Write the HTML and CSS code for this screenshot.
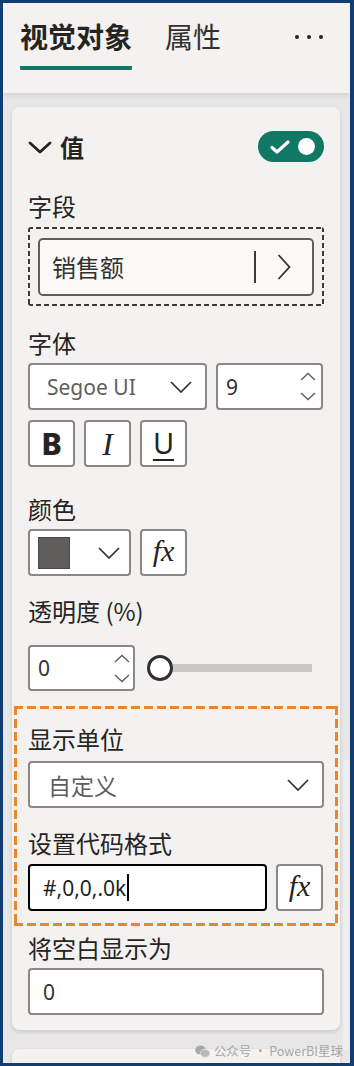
FILE: index.html
```html
<!DOCTYPE html>
<html lang="zh-CN">
<head>
<meta charset="utf-8">
<title>格式</title>
<link rel="stylesheet" href="styles.css">
</head>
<body>
<div class="app">
  <header class="tabs">
    <div class="tab active">视觉对象</div>
    <div class="tab">属性</div>
    <div class="more">
      <svg width="30" height="6" viewBox="0 0 30 6"><circle cx="3" cy="3" r="2"/><circle cx="15" cy="3" r="2"/><circle cx="27" cy="3" r="2"/></svg>
    </div>
  </header>

  <main class="pane">
    <section class="card">
      <div class="card-head">
        <svg class="head-chev" width="24" height="13" viewBox="0 0 24 13"><polyline points="2,2 12,11 22,2"/></svg>
        <span class="card-title">值</span>
        <div class="toggle">
          <svg width="22" height="16" viewBox="0 0 22 16"><polyline points="3,8.5 8,13 19,3"/></svg>
          <span class="knob"></span>
        </div>
      </div>

      <div class="label first">字段</div>
      <div class="drop-zone">
        <div class="well">
          <span class="well-text">销售额</span>
          <span class="sep"></span>
          <svg class="right-chev" width="14" height="26" viewBox="0 0 14 26"><polyline points="1.5,1 12.5,13 1.5,25"/></svg>
        </div>
      </div>

      <div class="label after-zone">字体</div>
      <div class="row">
        <div class="box font-select">
          <span class="value latin muted">Segoe UI</span>
          <svg class="down-chev" width="22" height="12" viewBox="0 0 22 12"><polyline points="1,1 11,11 21,1"/></svg>
        </div>
        <div class="box size-input">
          <span class="value latin">9</span>
          <div class="spin">
            <svg width="16" height="9" viewBox="0 0 16 9"><polyline points="1,8 8,1.5 15,8"/></svg>
            <svg width="16" height="9" viewBox="0 0 16 9"><polyline points="1,1 8,7.5 15,1"/></svg>
          </div>
        </div>
      </div>
      <div class="row style-row">
        <div class="box btn bold">B</div>
        <div class="box btn italic">I</div>
        <div class="box btn under">U</div>
      </div>

      <div class="label after-btns">颜色</div>
      <div class="row">
        <div class="box color-select">
          <span class="swatch"></span>
          <svg class="down-chev" width="22" height="12" viewBox="0 0 22 12"><polyline points="1,1 11,11 21,1"/></svg>
        </div>
        <div class="box btn fx">fx</div>
      </div>

      <div class="label after-row">透明度 (%)</div>
      <div class="row opacity-row">
        <div class="box num-input">
          <span class="value latin">0</span>
          <div class="spin">
            <svg width="16" height="9" viewBox="0 0 16 9"><polyline points="1,8 8,1.5 15,8"/></svg>
            <svg width="16" height="9" viewBox="0 0 16 9"><polyline points="1,1 8,7.5 15,1"/></svg>
          </div>
        </div>
        <div class="slider">
          <span class="thumb"></span>
          <span class="track"></span>
        </div>
      </div>

      <div class="highlight">
        <div class="label">显示单位</div>
        <div class="box wide-select">
          <span class="value muted">自定义</span>
          <svg class="down-chev" width="22" height="12" viewBox="0 0 22 12"><polyline points="1,1 11,11 21,1"/></svg>
        </div>
        <div class="label after-row">设置代码格式</div>
        <div class="row">
          <div class="box code-input">
            <span class="value latin strong">#,0,0,.0k</span><span class="caret"></span>
          </div>
          <div class="box btn fx">fx</div>
        </div>
      </div>

      <div class="label after-hl">将空白显示为</div>
      <div class="box blank-input">
        <span class="value latin">0</span>
      </div>
    </section>

    <section class="card next"></section>

    <div class="scroll-thumb"></div>
    <div class="watermark">
      <svg width="15" height="13" viewBox="0 0 15 13"><ellipse cx="5.5" cy="5" rx="5.3" ry="4.5"/><ellipse cx="10" cy="8.3" rx="4.8" ry="4" class="b2"/></svg>
      <span>公众号 · PowerBI星球</span>
    </div>
  </main>
</div>
</body>
</html>
```

FILE: styles.css
```css
* {
  box-sizing: border-box;
  margin: 0;
  padding: 0;
}

html, body {
  width: 354px;
  height: 1066px;
  overflow: hidden;
}

body {
  background: #123d70;
  font-family: "Noto Sans CJK SC", "Noto Sans", sans-serif;
  color: #252423;
}

.app {
  position: relative;
  margin: 3px 4px 3px 3px;
  height: 1060px;
  background: #e7e7e7;
  overflow: hidden;
  display: flex;
  flex-direction: column;
}

/* ---------- tabs ---------- */
.tabs {
  flex: none;
  height: 90px;
  background: #f3f2f1;
  display: flex;
  align-items: flex-start;
  padding: 15px 0 0 17px;
  box-shadow: 0 2px 5px rgba(0, 0, 0, 0.10);
  position: relative;
  z-index: 1;
}

.tab {
  font-size: 28px;
  line-height: 36px;
  color: #323130;
  padding-bottom: 12px;
  margin-right: 33px;
}

.tab.active {
  font-weight: 700;
  color: #252423;
  border-bottom: 4px solid #117865;
  border-radius: 0 0 1px 1px;
}

.more {
  margin-left: auto;
  margin-right: 26px;
  padding-top: 16px;
}

.more svg {
  display: block;
  fill: #252423;
}

/* ---------- pane ---------- */
.pane {
  position: relative;
  flex: 1;
  display: flex;
  flex-direction: column;
  padding: 14px 10px 0 9px;
}

.card {
  background: #f3f2f1;
  border-radius: 8px;
  box-shadow: 0 2px 4px rgba(0, 0, 0, 0.13);
  padding: 24px 16px 15px 16px;
  display: flex;
  flex-direction: column;
}

.card.next {
  margin-top: 19px;
  height: 40px;
  flex: none;
}

.card-head {
  height: 31px;
  display: flex;
  align-items: center;
}

.head-chev {
  display: block;
  fill: none;
  stroke: #252423;
  stroke-width: 2.8;
  stroke-linecap: round;
  stroke-linejoin: round;
  margin-top: 1px;
}

.card-title {
  margin-left: 8px;
  font-size: 24px;
  font-weight: 700;
  line-height: 31px;
}

.toggle {
  margin-left: auto;
  width: 66px;
  height: 31px;
  border-radius: 16px;
  background: #117865;
  display: flex;
  align-items: center;
  padding: 0 9px 0 11px;
  justify-content: space-between;
}

.toggle svg {
  display: block;
  fill: none;
  stroke: #ffffff;
  stroke-width: 3.2;
  stroke-linecap: round;
  stroke-linejoin: round;
}

.knob {
  width: 17px;
  height: 17px;
  border-radius: 50%;
  background: #ffffff;
}

/* ---------- labels ---------- */
.label {
  font-size: 24px;
  line-height: 32px;
  color: #252423;
  white-space: nowrap;
}

.label.first { margin-top: 28px; }
.label.after-zone { margin-top: 21px; }
.label.after-btns { margin-top: 26px; }
.label.after-row { margin-top: 19px; }
.label.after-hl { margin-top: 6px; }

/* ---------- drop zone ---------- */
.drop-zone {
  margin-top: 5px;
  padding: 11px 10px 10px 10px;
  background:
    repeating-linear-gradient(90deg, #3b3a39 0 5px, transparent 5px 8px) left top / 100% 2px no-repeat,
    repeating-linear-gradient(90deg, #3b3a39 0 5px, transparent 5px 8px) left bottom / 100% 2px no-repeat,
    repeating-linear-gradient(180deg, #3b3a39 0 5px, transparent 5px 8px) left top / 2px 100% no-repeat,
    repeating-linear-gradient(180deg, #3b3a39 0 5px, transparent 5px 8px) right top / 2px 100% no-repeat;
  border-radius: 3px;
}

.well {
  height: 58px;
  border: 2px solid #605e5c;
  border-radius: 5px;
  background: #faf9f8;
  display: flex;
  align-items: center;
  padding: 0 21px 0 12px;
}

.well-text {
  flex: 1;
  font-size: 24px;
  color: #323130;
  line-height: 32px;
}

.sep {
  width: 2px;
  height: 32px;
  background: #3b3a39;
  margin-right: 21px;
}

.right-chev {
  display: block;
  fill: none;
  stroke: #323130;
  stroke-width: 1.8;
}

/* ---------- generic controls ---------- */
.row {
  display: flex;
  gap: 9px;
  margin-top: 4px;
}

.box {
  height: 47px;
  border: 2px solid #8a8886;
  border-radius: 4px;
  background: #ffffff;
  display: flex;
  align-items: center;
}

.value {
  font-size: 23px;
  line-height: 30px;
  color: #323130;
  white-space: nowrap;
}

.value.latin {
  font-family: "Noto Sans", "Noto Sans CJK SC", sans-serif;
  font-size: 21px;
}

.value.muted { color: #605e5c; }
.value.strong { color: #201f1e; }

.down-chev {
  display: block;
  flex: none;
  fill: none;
  stroke: #323130;
  stroke-width: 1.7;
  margin-left: auto;
}

.spin {
  margin-left: auto;
  display: flex;
  flex-direction: column;
  gap: 11px;
}

.spin svg {
  display: block;
  fill: none;
  stroke: #605e5c;
  stroke-width: 1.4;
}

.font-select {
  width: 179px;
  padding: 0 13px 0 17px;
}

.size-input {
  width: 107px;
  padding: 0 5px 0 8px;
}

.style-row {
  margin-top: 10px;
}

.btn {
  width: 47px;
  justify-content: center;
  color: #252423;
}

.btn.bold {
  font-family: "Noto Sans", sans-serif;
  font-weight: 800;
  font-size: 31px;
  line-height: 1;
}

.btn.italic {
  font-family: "Liberation Serif", serif;
  font-style: italic;
  font-size: 32px;
  line-height: 1;
}

.btn.under {
  font-family: "Noto Sans", sans-serif;
  font-size: 29px;
  line-height: 1;
  text-decoration: underline;
  text-decoration-thickness: 2px;
  text-underline-offset: 5px;
  padding-bottom: 2px;
}

.btn.fx {
  font-family: "Liberation Serif", serif;
  font-style: italic;
  font-size: 30px;
  line-height: 1;
  padding-bottom: 3px;
}

.color-select {
  width: 103px;
  padding: 0 9px 0 8px;
}

.swatch {
  width: 32px;
  height: 32px;
  background: #5f5e5d;
  border: 1px solid #4a4948;
}

.opacity-row {
  margin-top: 18px;
  gap: 0;
  align-items: center;
}

.num-input {
  width: 107px;
  height: 46px;
  padding: 0 3px 0 8px;
}

.slider {
  display: flex;
  align-items: center;
  margin-left: 12px;
}

.thumb {
  width: 26px;
  height: 26px;
  border-radius: 50%;
  border: 3px solid #323130;
  background: #ffffff;
  flex: none;
}

.track {
  width: 139px;
  height: 8px;
  background: #c8c6c4;
}

/* ---------- highlighted block ---------- */
.highlight {
  margin: 15px -14px 0 -14px;
  padding: 17px 14px 15px 14px;
  background:
    repeating-linear-gradient(90deg, #e9862a 0 9px, transparent 9px 13px) left top / 100% 3px no-repeat,
    repeating-linear-gradient(90deg, #e9862a 0 9px, transparent 9px 13px) left bottom / 100% 3px no-repeat,
    repeating-linear-gradient(180deg, #e9862a 0 9px, transparent 9px 13px) left top / 3px 100% no-repeat,
    repeating-linear-gradient(180deg, #e9862a 0 9px, transparent 9px 13px) right top / 3px 100% no-repeat;
}

.wide-select {
  margin-top: 6px;
  padding: 0 13px 0 18px;
}

.highlight .row {
  margin-top: 5px;
}

.code-input {
  width: 239px;
  border: 2px solid #000000;
  padding-left: 13px;
}

.caret {
  width: 2px;
  height: 27px;
  background: #000000;
  margin-left: 1px;
}

.blank-input {
  margin-top: 4px;
  padding-left: 13px;
}

/* ---------- overlays ---------- */
.scroll-thumb {
  position: absolute;
  right: 1px;
  top: 667px;
  width: 6px;
  height: 290px;
  border-radius: 3px;
  background: #eeeeee;
}

.watermark {
  position: absolute;
  right: 7px;
  top: 950px;
  display: flex;
  align-items: center;
  gap: 4px;
  font-family: "Noto Sans CJK SC", sans-serif;
  font-size: 12.5px;
  line-height: 16px;
  color: #a6a6a6;
}

.watermark svg {
  display: block;
  fill: #a8a8a8;
}

.watermark .b2 {
  fill: #b8b8b8;
  stroke: #e7e7e7;
  stroke-width: 0.8;
}
```
